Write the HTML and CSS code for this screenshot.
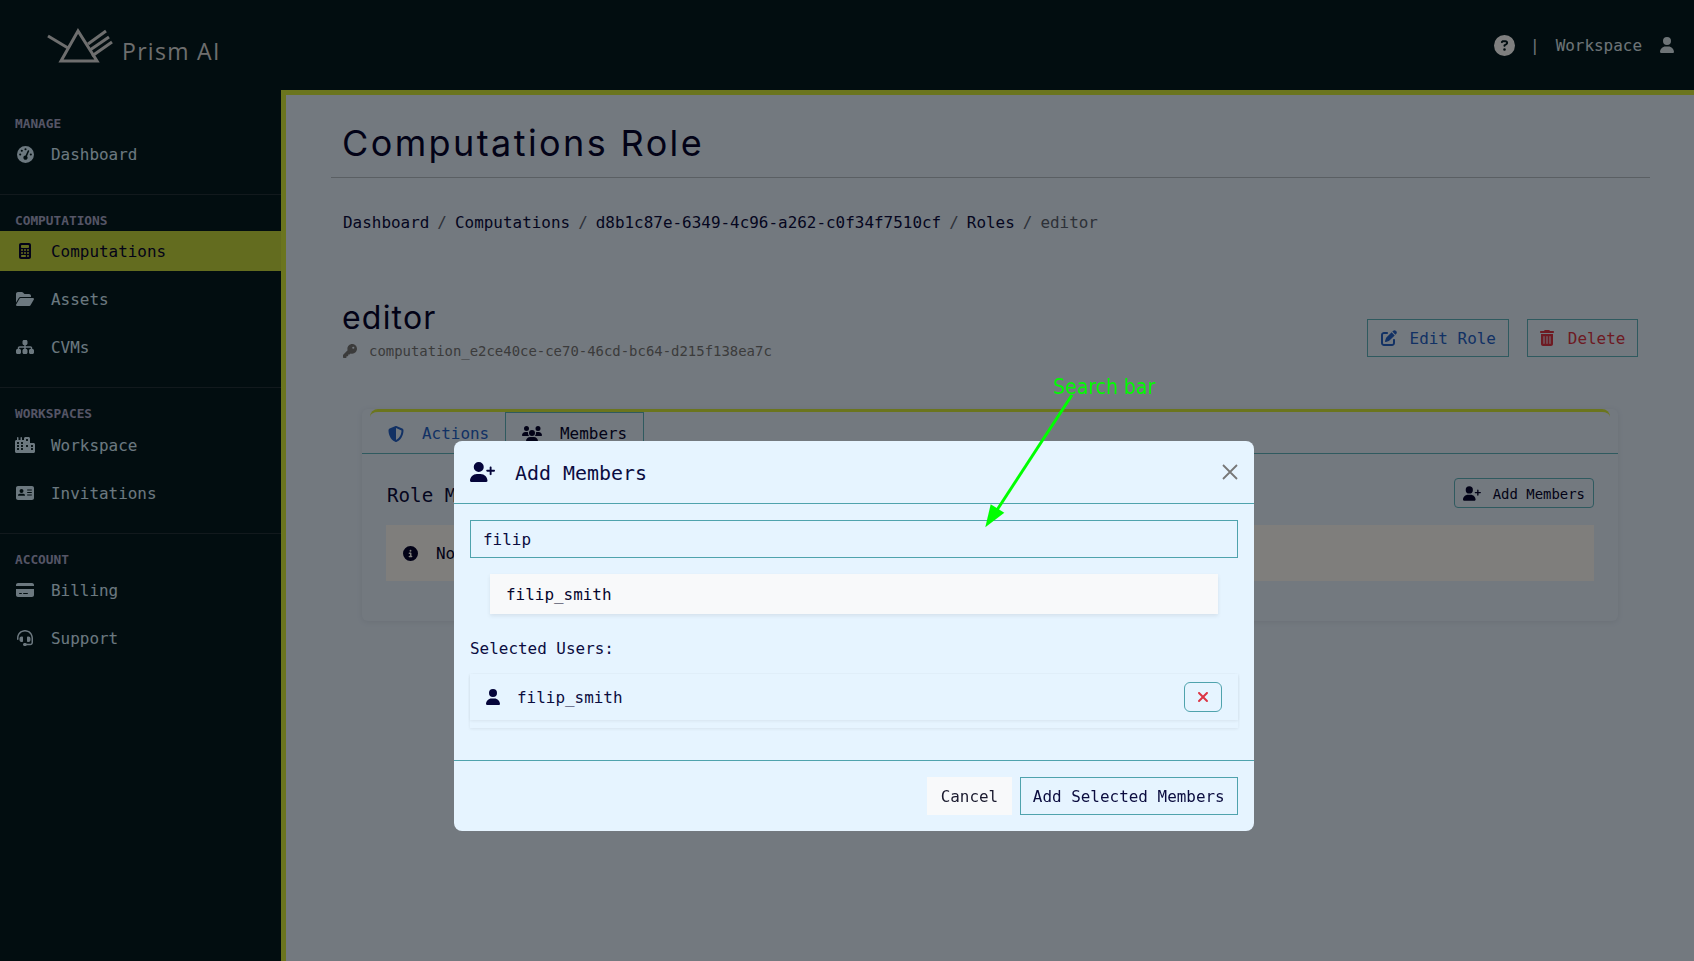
FILE: index.html
```html
<!DOCTYPE html>
<html lang="en">
<head>
<meta charset="utf-8">
<title>Computations Role</title>
<link rel="stylesheet" href="styles.css">
</head>
<body>
<div class="app">
  <header class="topbar">
    <a class="logo">
      <svg class="logo-mark" viewBox="0 0 70 36"><g fill="none" stroke="#dcdcdc" stroke-width="3"><path d="M31 3 14 33H50Z"/><path d="M1 8 21 20"/><path d="M41 16 59 3M43 22 62 9M45 28 65 14"/></g></svg>
      <span class="logo-text">Prism AI</span>
    </a>
    <div class="top-actions">
      <svg class="ic-help" viewBox="0 0 512 512"><path d="M256 512A256 256 0 1 0 256 0a256 256 0 1 0 0 512zM169.8 165.3c7.9-22.3 29.1-37.3 52.8-37.3h58.3c34.9 0 63.1 28.3 63.1 63.1c0 22.6-12.1 43.5-31.7 54.8L280 264.4c-.2 13-10.9 23.6-24 23.6c-13.3 0-24-10.7-24-24V250.5c0-8.6 4.6-16.5 12.1-20.8l44.3-25.4c4.7-2.7 7.6-7.7 7.6-13.1c0-8.4-6.8-15.1-15.1-15.1H222.6c-3.4 0-6.4 2.1-7.5 5.3l-.4 1.2c-4.4 12.5-18.2 19-30.6 14.6s-19-18.2-14.6-30.6l.4-1.2zM224 352a32 32 0 1 1 64 0 32 32 0 1 1 -64 0z"/></svg>
      <span class="top-sep">|</span>
      <span class="top-link">Workspace</span>
      <svg class="ic-user-top" viewBox="0 0 448 512"><path d="M224 256A128 128 0 1 0 224 0a128 128 0 1 0 0 256zm-45.7 48C79.8 304 0 383.8 0 482.3C0 498.7 13.3 512 29.7 512H418.3c16.4 0 29.7-13.3 29.7-29.7C448 383.8 368.2 304 269.7 304H178.3z"/></svg>
    </div>
  </header>

  <aside class="sidebar">
    <section class="nav-group first">
      <h6 class="nav-label">MANAGE</h6>
      <a class="nav-item"><span class="nav-ic"><svg viewBox="0 0 512 512" width="17" height="17"><path d="M0 256a256 256 0 1 1 512 0A256 256 0 1 1 0 256zM288 96a32 32 0 1 0 -64 0 32 32 0 1 0 64 0zM256 416c35.3 0 64-28.7 64-64c0-17.4-6.9-33.1-18.1-44.6L366 161.7c5.3-12.1-.2-26.3-12.3-31.6s-26.3 .2-31.6 12.3L257.9 288c-.6 0-1.3 0-1.9 0c-35.3 0-64 28.7-64 64s28.7 64 64 64zM176 144a32 32 0 1 0 -64 0 32 32 0 1 0 64 0zM96 288a32 32 0 1 0 0-64 32 32 0 1 0 0 64zm352-32a32 32 0 1 0 -64 0 32 32 0 1 0 64 0z"/></svg></span>Dashboard</a>
    </section>
    <section class="nav-group">
      <h6 class="nav-label">COMPUTATIONS</h6>
      <a class="nav-item active"><span class="nav-ic"><svg viewBox="0 0 384 512" width="12" height="16"><path d="M64 0C28.7 0 0 28.7 0 64V448c0 35.3 28.7 64 64 64H320c35.3 0 64-28.7 64-64V64c0-35.3-28.7-64-64-64H64zM96 64H288c17.7 0 32 14.3 32 32v32c0 17.7-14.3 32-32 32H96c-17.7 0-32-14.3-32-32V96c0-17.7 14.3-32 32-32zm32 160a32 32 0 1 1 -64 0 32 32 0 1 1 64 0zM96 352a32 32 0 1 1 0-64 32 32 0 1 1 0 64zM64 416c0-17.7 14.3-32 32-32h96c17.7 0 32 14.3 32 32s-14.3 32-32 32H96c-17.7 0-32-14.3-32-32zM192 256a32 32 0 1 1 0-64 32 32 0 1 1 0 64zm32 64a32 32 0 1 1 -64 0 32 32 0 1 1 64 0zm64-64a32 32 0 1 1 0-64 32 32 0 1 1 0 64zm32 64a32 32 0 1 1 -64 0 32 32 0 1 1 64 0zM288 448a32 32 0 1 1 0-64 32 32 0 1 1 0 64z"/></svg></span>Computations</a>
      <a class="nav-item"><span class="nav-ic"><svg viewBox="0 0 576 512" width="18" height="16"><path d="M88.7 223.8L0 375.8V96C0 60.7 28.7 32 64 32H181.5c17 0 33.3 6.7 45.3 18.7l26.5 26.5c12 12 28.3 18.7 45.3 18.7H416c35.3 0 64 28.7 64 64v32H144c-22.8 0-43.8 12.1-55.3 31.8zm27.6 16.1C122.1 230 132.6 224 144 224H544c11.5 0 22 6.1 27.7 16.1s5.7 22.2-.1 32.1l-112 192C453.9 474 443.4 480 432 480H32c-11.5 0-22-6.1-27.7-16.1s-5.7-22.2 .1-32.1l112-192z"/></svg></span>Assets</a>
      <a class="nav-item"><span class="nav-ic"><svg viewBox="0 0 576 512" width="18" height="16"><path d="M208 80c0-26.5 21.5-48 48-48h64c26.5 0 48 21.5 48 48v64c0 26.5-21.5 48-48 48h-8v40H464c30.9 0 56 25.1 56 56v32h8c26.5 0 48 21.5 48 48v64c0 26.5-21.5 48-48 48H464c-26.5 0-48-21.5-48-48V368c0-26.5 21.5-48 48-48h8V288c0-4.4-3.6-8-8-8H312v40h8c26.5 0 48 21.5 48 48v64c0 26.5-21.5 48-48 48H256c-26.5 0-48-21.5-48-48V368c0-26.5 21.5-48 48-48h8V280H112c-4.4 0-8 3.6-8 8v32h8c26.5 0 48 21.5 48 48v64c0 26.5-21.5 48-48 48H48c-26.5 0-48-21.5-48-48V368c0-26.5 21.5-48 48-48h8V288c0-30.9 25.1-56 56-56H264V192h-8c-26.5 0-48-21.5-48-48V80z"/></svg></span>CVMs</a>
    </section>
    <section class="nav-group">
      <h6 class="nav-label">WORKSPACES</h6>
      <a class="nav-item"><span class="nav-ic"><svg viewBox="0 0 640 512" width="20" height="16"><path d="M480 48c0-26.5-21.5-48-48-48H336c-26.5 0-48 21.5-48 48V96H224V24c0-13.3-10.7-24-24-24s-24 10.7-24 24V96H112V24c0-13.3-10.7-24-24-24S64 10.7 64 24V96H48C21.5 96 0 117.5 0 144V464c0 26.5 21.5 48 48 48H592c26.5 0 48-21.5 48-48V240c0-26.5-21.5-48-48-48H480V48zm96 320v32c0 8.8-7.2 16-16 16H528c-8.8 0-16-7.2-16-16V368c0-8.8 7.2-16 16-16h32c8.8 0 16 7.2 16 16zM240 416H208c-8.8 0-16-7.2-16-16V368c0-8.8 7.2-16 16-16h32c8.8 0 16 7.2 16 16v32c0 8.8-7.2 16-16 16zM128 400c0 8.8-7.2 16-16 16H80c-8.8 0-16-7.2-16-16V368c0-8.8 7.2-16 16-16h32c8.8 0 16 7.2 16 16v32zM560 256c8.8 0 16 7.2 16 16v32c0 8.8-7.2 16-16 16H528c-8.8 0-16-7.2-16-16V272c0-8.8 7.2-16 16-16h32zM256 176v32c0 8.8-7.2 16-16 16H208c-8.8 0-16-7.2-16-16V176c0-8.8 7.2-16 16-16h32c8.8 0 16 7.2 16 16zM112 160c8.8 0 16 7.2 16 16v32c0 8.8-7.2 16-16 16H80c-8.8 0-16-7.2-16-16V176c0-8.8 7.2-16 16-16h32zM256 304c0 8.8-7.2 16-16 16H208c-8.8 0-16-7.2-16-16V272c0-8.8 7.2-16 16-16h32c8.8 0 16 7.2 16 16v32c0 8.8-7.2 16-16 16zM112 320H80c-8.8 0-16-7.2-16-16V272c0-8.8 7.2-16 16-16h32c8.8 0 16 7.2 16 16v32c0 8.8-7.2 16-16 16zm304-48v32c0 8.8-7.2 16-16 16H368c-8.8 0-16-7.2-16-16V272c0-8.8 7.2-16 16-16h32c8.8 0 16 7.2 16 16zM368 64h32c8.8 0 16 7.2 16 16v32c0 8.8-7.2 16-16 16H368c-8.8 0-16-7.2-16-16V80c0-8.8 7.2-16 16-16zm48 240"/></svg></span>Workspace</a>
      <a class="nav-item"><span class="nav-ic"><svg viewBox="0 0 576 512" width="18" height="16"><path fill-rule="evenodd" d="M64 32H512c35.3 0 64 28.700 64 64V416c0 35.300-28.700 64-64 64H64c-35.300 0-64-28.700-64-64V96C0 60.700 28.700 32 64 32zM176 128a64 64 0 1 0 0 128 64 64 0 1 0 0-128zM118 280c-30 0-54 24-54 54 0 6 5 10 10 10H278c5 0 10-4 10-10 0-30-24-54-54-54zM368 144c-9 0-16 7-16 16s7 16 16 16H496c9 0 16-7 16-16s-7-16-16-16zm0 80c-9 0-16 7-16 16s7 16 16 16H496c9 0 16-7 16-16s-7-16-16-16zm0 80c-9 0-16 7-16 16s7 16 16 16H496c9 0 16-7 16-16s-7-16-16-16z"/></svg></span>Invitations</a>
    </section>
    <section class="nav-group">
      <h6 class="nav-label">ACCOUNT</h6>
      <a class="nav-item"><span class="nav-ic"><svg viewBox="0 0 576 512" width="18" height="16"><path d="M64 32C28.700 32 0 60.700 0 96v32H576V96c0-35.300-28.700-64-64-64H64zM576 224H0V416c0 35.300 28.700 64 64 64H512c35.300 0 64-28.700 64-64V224zM112 352h64c8.800 0 16 7.200 16 16s-7.200 16-16 16H112c-8.800 0-16-7.200-16-16s7.200-16 16-16zm112 16c0-8.800 7.200-16 16-16H368c8.800 0 16 7.200 16 16s-7.200 16-16 16H240c-8.800 0-16-7.200-16-16z"/></svg></span>Billing</a>
      <a class="nav-item"><span class="nav-ic"><svg viewBox="0 0 512 512" width="16" height="16"><path d="M256 48C141.100 48 48 141.100 48 256v40c0 13.300-10.700 24-24 24s-24-10.700-24-24V256C0 114.600 114.600 0 256 0S512 114.600 512 256V400.100c0 48.600-39.400 88-88.100 88L313.600 488c-8.300 14.300-23.800 24-41.600 24H240c-26.500 0-48-21.500-48-48s21.500-48 48-48h32c17.800 0 33.300 9.700 41.600 24l110.400 .1c22.100 0 40-17.900 40-40V256c0-114.900-93.100-208-208-208zM144 208h16c17.700 0 32 14.300 32 32V352c0 17.700-14.300 32-32 32H144c-35.300 0-64-28.700-64-64V272c0-35.300 28.700-64 64-64zm224 0c35.300 0 64 28.700 64 64v48c0 35.300-28.700 64-64 64H352c-17.700 0-32-14.300-32-32V240c0-17.700 14.300-32 32-32h16z"/></svg></span>Support</a>
    </section>
  </aside>

  <main class="main">
    <div class="page-title"><h1>Computations Role</h1></div>
    <nav class="crumbs">
      <a>Dashboard</a><i>/</i><a>Computations</a><i>/</i><a>d8b1c87e-6349-4c96-a262-c0f34f7510cf</a><i>/</i><a>Roles</a><i>/</i><span>editor</span>
    </nav>
    <div class="role-head">
      <div>
        <h2>editor</h2>
        <div class="role-id">
          <svg viewBox="0 0 512 512"><path d="M336 352c97.200 0 176-78.800 176-176S433.200 0 336 0S160 78.800 160 176c0 18.700 2.900 36.800 8.300 53.700L7 391c-4.500 4.500-7 10.600-7 17v80c0 13.300 10.700 24 24 24h80c13.300 0 24-10.700 24-24V448h40c13.300 0 24-10.700 24-24V384h40c6.400 0 12.500-2.500 17-7l33.300-33.300c16.900 5.400 35 8.300 53.700 8.300zM376 96a40 40 0 1 1 0 80 40 40 0 1 1 0-80z"/></svg>
          <span>computation_e2ce40ce-ce70-46cd-bc64-d215f138ea7c</span>
        </div>
      </div>
      <div class="role-btns">
        <button class="btn-edit"><svg viewBox="0 0 512 512"><path d="M471.600 21.700c-21.900-21.900-57.300-21.900-79.200 0L362.300 51.700l97.900 97.900 30.100-30.100c21.900-21.900 21.900-57.300 0-79.200L471.600 21.700zm-299.200 220c-6.100 6.100-10.800 13.600-13.500 21.900l-29.600 88.800c-2.900 8.600-.6 18.100 5.800 24.600s15.900 8.700 24.600 5.800l88.800-29.600c8.200-2.700 15.700-7.400 21.900-13.500L437.700 172.300 339.700 74.300 172.400 241.700zM96 64C43 64 0 107 0 160V416c0 53 43 96 96 96H352c53 0 96-43 96-96V320c0-17.700-14.300-32-32-32s-32 14.300-32 32v96c0 17.700-14.300 32-32 32H96c-17.700 0-32-14.300-32-32V160c0-17.700 14.300-32 32-32h96c17.700 0 32-14.300 32-32s-14.300-32-32-32H96z"/></svg>Edit Role</button>
        <button class="btn-del"><svg viewBox="0 0 448 512"><path d="M135.200 17.700C140.600 6.800 151.700 0 163.800 0H284.200c12.100 0 23.200 6.800 28.600 17.700L320 32h96c17.700 0 32 14.300 32 32s-14.300 32-32 32H32C14.300 96 0 81.700 0 64S14.300 32 32 32h96l7.200-14.300zM32 128H416V448c0 35.300-28.700 64-64 64H96c-35.300 0-64-28.700-64-64V128zm96 64c-8.800 0-16 7.200-16 16V432c0 8.800 7.200 16 16 16s16-7.200 16-16V208c0-8.800-7.200-16-16-16zm96 0c-8.800 0-16 7.200-16 16V432c0 8.800 7.200 16 16 16s16-7.200 16-16V208c0-8.800-7.200-16-16-16zm96 0c-8.800 0-16 7.200-16 16V432c0 8.800 7.200 16 16 16s16-7.200 16-16V208c0-8.800-7.200-16-16-16z"/></svg>Delete</button>
      </div>
    </div>

    <section class="card">
      <div class="card-head">
        <div class="tabs">
          <a class="tab tab-actions"><svg viewBox="0 0 512 512" width="16" height="16"><path d="M256 0c4.600 0 9.200 1 13.400 2.900L457.700 82.800c22 9.300 38.400 31 38.300 57.200c-.5 99.200-41.300 280.700-213.600 363.200c-16.700 8-36.100 8-52.800 0C57.300 420.700 16.500 239.200 16 140c-.1-26.200 16.300-47.900 38.300-57.200L242.700 2.900C246.800 1 251.400 0 256 0zm0 66.800V444.800C394 378 431.100 230.100 432 141.400L256 66.800l0 0z"/></svg>Actions</a>
          <a class="tab tab-members"><svg viewBox="0 0 640 512" width="20" height="16"><path d="M144 0a80 80 0 1 1 0 160A80 80 0 1 1 144 0zM512 0a80 80 0 1 1 0 160A80 80 0 1 1 512 0zM0 298.700C0 239.800 47.800 192 106.700 192h42.700c15.900 0 31 3.500 44.600 9.700c-1.300 7.200-1.900 14.700-1.900 22.300c0 38.200 16.800 72.500 43.300 96c-.2 0-.4 0-.7 0H21.300C9.600 320 0 310.400 0 298.700zM405.300 320c-.2 0-.4 0-.7 0c26.600-23.500 43.300-57.800 43.300-96c0-7.600-.7-15-1.900-22.300c13.600-6.300 28.700-9.700 44.600-9.700h42.700C592.200 192 640 239.800 640 298.700c0 11.800-9.600 21.300-21.300 21.300H405.300zM224 224a96 96 0 1 1 192 0 96 96 0 1 1 -192 0zM128 485.300C128 411.700 187.700 352 261.300 352H378.700C452.300 352 512 411.700 512 485.300c0 14.700-11.900 26.700-26.700 26.700H154.700c-14.700 0-26.700-11.900-26.700-26.700z"/></svg>Members</a>
        </div>
      </div>
      <div class="card-body">
        <div class="members-row">
          <h5>Role Members</h5>
          <button class="btn-add-sm"><svg viewBox="0 0 640 512"><path d="M96 128a128 128 0 1 1 256 0A128 128 0 1 1 96 128zM0 482.300C0 383.800 79.800 304 178.300 304h91.400C368.200 304 448 383.800 448 482.300c0 16.400-13.300 29.700-29.700 29.700H29.700C13.300 512 0 498.700 0 482.300zM504 312V248H440c-13.300 0-24-10.700-24-24s10.700-24 24-24h64V136c0-13.300 10.700-24 24-24s24 10.700 24 24v64h64c13.300 0 24 10.700 24 24s-10.700 24-24 24H552v64c0 13.300-10.700 24-24 24s-24-10.700-24-24z"/></svg>Add Members</button>
        </div>
        <div class="alert">
          <svg viewBox="0 0 512 512"><path d="M256 512A256 256 0 1 0 256 0a256 256 0 1 0 0 512zM216 336h24V272H216c-13.300 0-24-10.700-24-24s10.700-24 24-24h48c13.300 0 24 10.700 24 24v88h8c13.300 0 24 10.700 24 24s-10.700 24-24 24H216c-13.300 0-24-10.700-24-24s10.700-24 24-24zm40-208a32 32 0 1 1 0 64 32 32 0 1 1 0-64z"/></svg>
          <span>No members found for this role.</span>
        </div>
      </div>
    </section>
  </main>
</div>

<div class="backdrop">
  <div class="modal">
    <div class="modal-head">
      <svg class="modal-ic" viewBox="0 0 640 512"><path d="M96 128a128 128 0 1 1 256 0A128 128 0 1 1 96 128zM0 482.300C0 383.800 79.800 304 178.300 304h91.400C368.200 304 448 383.800 448 482.300c0 16.400-13.300 29.700-29.700 29.700H29.700C13.300 512 0 498.700 0 482.300zM504 312V248H440c-13.300 0-24-10.700-24-24s10.700-24 24-24h64V136c0-13.300 10.700-24 24-24s24 10.700 24 24v64h64c13.300 0 24 10.700 24 24s-10.700 24-24 24H552v64c0 13.300-10.700 24-24 24s-24-10.700-24-24z"/></svg>
      <h5>Add Members</h5>
      <svg class="modal-close" viewBox="0 0 16 16"><path d="M1 1 15 15M15 1 1 15" stroke="#777" stroke-width="1.800" fill="none"/></svg>
    </div>
    <div class="modal-body">
      <input class="search" value="filip">
      <div class="suggest">filip_smith</div>
      <div class="sel-label">Selected Users:</div>
      <div class="sel-list">
        <div class="sel-row">
          <svg class="sel-user" viewBox="0 0 448 512"><path d="M224 256A128 128 0 1 0 224 0a128 128 0 1 0 0 256zm-45.700 48C79.800 304 0 383.800 0 482.300C0 498.700 13.300 512 29.700 512H418.300c16.400 0 29.700-13.300 29.700-29.700C448 383.800 368.200 304 269.700 304H178.300z"/></svg>
          <span>filip_smith</span>
          <button class="sel-remove"><svg viewBox="0 0 384 512"><path d="M342.600 150.600c12.500-12.500 12.500-32.800 0-45.300s-32.800-12.500-45.300 0L192 210.700 86.600 105.400c-12.500-12.500-32.800-12.500-45.300 0s-12.500 32.800 0 45.300L146.700 256 41.400 361.400c-12.500 12.500-12.500 32.800 0 45.300s32.800 12.500 45.300 0L192 301.300 297.400 406.600c12.500 12.500 32.800 12.500 45.300 0s12.500-32.800 0-45.300L237.300 256 342.600 150.600z"/></svg></button>
        </div>
      </div>
    </div>
    <div class="modal-foot">
      <button class="btn-cancel">Cancel</button>
      <button class="btn-confirm">Add Selected Members</button>
    </div>
  </div>
</div>

<div class="note">
  <span class="note-text">Search bar</span>
  <svg class="note-arrow" viewBox="0 0 110 150"><path d="M87 3 12 118" stroke="#00ff00" stroke-width="3" fill="none"/><path d="M.3 135.300 5.700 112.300 19.300 120.700Z" fill="#00ff00"/></svg>
</div>
</body>
</html>
```
FILE: styles.css
```css
* { box-sizing: border-box; }
html, body { margin: 0; height: 100%; }
body {
  background: #e6f2ff;
  color: #0b0c3f;
  font-family: "DejaVu Sans Mono", monospace;
  font-size: 15.950px;
  overflow: hidden;
}
h1, h2, h5, h6 { margin: 0; font-weight: 400; }
button { font-family: inherit; background: none; cursor: pointer; }
svg { fill: currentColor; flex: none; display: block; }

.app {
  display: grid;
  grid-template-columns: 281px 1fr;
  grid-template-rows: 90px 1fr;
  height: 961px;
}

/* top bar */
.topbar {
  grid-column: 1 / 3;
  background: #041a20;
  display: flex;
  align-items: center;
  justify-content: space-between;
  padding: 0 20px 0 47px;
}
.logo { display: flex; align-items: flex-end; height: 36px; margin-top: 2px; }
.logo-mark { width: 70px; height: 36px; }
.logo-text {
  font-family: "Open Sans", sans-serif;
  font-size: 23px;
  line-height: 26px;
  color: #dcdcdc;
  margin-left: 5px;
  letter-spacing: 1.300px;
}
.top-actions { display: flex; align-items: center; color: #dce8ee; }
.ic-help { width: 21px; height: 21px; color: #fff; }
.top-sep { margin-left: 15px; }
.top-link { margin-left: 16px; }
.ic-user-top { width: 14px; height: 16px; margin-left: 18px; }

/* sidebar */
.sidebar { background: #041a20; }
.nav-group { padding: 16px 0 12px; border-bottom: 1px solid #25333a; }
.nav-group:last-child { border-bottom: 0; }
.nav-group.first { padding-top: 24px; }
.nav-group:nth-child(3) .nav-label { padding-bottom: 1px; }
.nav-label {
  font-size: 12.800px;
  font-weight: 700;
  line-height: 20px;
  padding-left: 15px;
  color: #aaaacc;
}
.nav-item {
  display: flex;
  align-items: center;
  height: 40px;
  margin-bottom: 8px;
  color: #d8f0ff;
}
.nav-item.active { background: #c6d83e; color: #060630; }
.nav-ic { width: 20px; margin: 0 16px 0 15px; display: flex; justify-content: center; }

/* main */
.main {
  border-top: 5px solid #d6ea3c;
  border-left: 5px solid #d6ea3c;
  padding: 0 44px 0 45px;
  min-width: 0;
}
.page-title {
  height: 83px;
  padding: 26px 11px 0;
  border-bottom: 1px solid #b5bfc6;
}
.page-title h1 {
  font-family: "Inter", sans-serif;
  font-size: 36px;
  line-height: 44px;
  letter-spacing: 2.400px;
  color: #05052e;
}
.crumbs { margin-top: 33px; padding: 0 12px; line-height: 24px; display: flex; color: #0b0c3f; }
.crumbs i { font-style: normal; padding: 0 8px; color: #5b6370; }
.crumbs span { color: #5b6370; }

.role-head {
  margin-top: 63px;
  padding: 0 12px;
  display: flex;
  justify-content: space-between;
  align-items: flex-end;
}
.role-head h2 {
  font-family: "Inter", sans-serif;
  font-size: 32px;
  line-height: 40px;
  letter-spacing: 1.200px;
  margin-left: -1px;
  color: #05052e;
}
.role-id {
  display: flex;
  align-items: center;
  margin-top: 3px;
  font-size: 13.950px;
  line-height: 20px;
  color: #777;
}
.role-id svg { width: 14px; height: 14px; margin-right: 12px; }
.role-btns { display: flex; gap: 18px; margin-bottom: 4px; }
.role-btns button {
  display: flex;
  align-items: center;
  height: 38px;
  border: 1px solid #5fb4bf;
  font-size: 15.950px;
  padding: 0 12px;
}
.role-btns svg { height: 16px; }
.btn-edit { color: #2563c9; }
.btn-edit svg { width: 16px; margin-right: 13px; }
.role-btns .btn-edit { padding: 0 11.900px 0 13px; }
.btn-del { color: #dc3545; }
.btn-del svg { width: 14px; margin-right: 14px; }
.role-btns .btn-del { padding-right: 11.600px; }

.card {
  margin: 48px 32px 0 31px;
  box-shadow: 0 1px 6px rgba(0, 0, 0, .08);
  border-radius: 6px;
}
.card-head { border-bottom: 1px solid #5fb4bf; height: 45px; }
.tabs {
  margin: 0 8px;
  height: 44px;
  border-top: 3px solid #d6ea3c;
  border-radius: 8px 8px 0 0;
  display: flex;
}
.tab { display: flex; align-items: center; padding-top: 2px; }
.tab-actions { width: 135px; padding-left: 18px; color: #2563c9; }
.tab-actions svg { margin-right: 18px; }
.tab-members {
  width: 139px;
  padding-left: 16px;
  border: 1px solid #5fb4bf;
  color: #05052e;
}
.tab-members svg { margin-right: 18px; }
.card-body { padding: 24px 24px 40px; }
.members-row { display: flex; justify-content: space-between; align-items: center; height: 30px; }
.members-row h5 { font-size: 19.200px; padding: 4px 0 0 1px; }
.btn-add-sm {
  display: flex;
  align-items: center;
  height: 30px;
  padding: 1px 8px 0;
  border: 1px solid #5fb4bf;
  border-radius: 4px;
  font-size: 13.950px;
  color: #05052e;
}
.btn-add-sm svg { width: 18px; height: 15px; margin-right: 12px; }
.alert {
  margin-top: 17px;
  height: 56px;
  padding-left: 17px;
  background: #fffcf8;
  display: flex;
  align-items: center;
  color: #05052e;
}
.alert svg { width: 15px; height: 15px; margin-right: 18px; }

/* modal */
.backdrop {
  position: fixed;
  inset: 0;
  background: rgba(0, 0, 0, .5);
  display: flex;
  justify-content: center;
  align-items: flex-start;
  padding: 441px 0 0 14px;
}
.modal {
  width: 800px;
  height: 390px;
  background: #e6f4ff;
  border-radius: 8px;
  display: flex;
  flex-direction: column;
}
.modal-head {
  height: 63px;
  flex: none;
  display: flex;
  align-items: center;
  padding: 0 16px;
  border-bottom: 1px solid #4fa3ad;
}
.modal-ic { width: 25px; height: 20px; margin-right: 20px; color: #05053a; }
.modal-head h5 { font-size: 19.950px; flex: 1; padding-top: 2px; }
.modal-close { width: 16px; height: 16px; }
.modal-body { padding: 16px; flex: 1; }
.search {
  display: block;
  width: 100%;
  height: 38px;
  border: 1px solid #4fa3ad;
  background: transparent;
  padding: 0 12px;
  font: inherit;
  color: inherit;
  outline: 0;
}
.suggest {
  margin: 16px 20px 22px;
  height: 40px;
  background: #f8f9fa;
  padding-left: 16px;
  display: flex;
  align-items: center;
  color: #05052e;
  box-shadow: 0 2px 4px rgba(0, 0, 0, .08);
}
.sel-label { line-height: 24px; padding-top: 1px; }
.sel-list {
  margin-top: 13px;
  padding-bottom: 8px;
  box-shadow: 0 1px 3px rgba(0, 0, 0, .07);
}
.sel-row {
  height: 46px;
  display: flex;
  align-items: center;
  padding: 0 16px;
  box-shadow: 0 1px 3px rgba(0, 0, 0, .07);
}
.sel-user { width: 14px; height: 16px; margin-right: 17px; color: #05053a; }
.sel-row span { flex: 1; }
.sel-remove {
  width: 38px;
  height: 30px;
  border: 1px solid #4fa3ad;
  border-radius: 6px;
  color: #dc3545;
  display: flex;
  align-items: center;
  justify-content: center;
  padding: 0;
}
.sel-remove svg { width: 12px; height: 16px; }
.modal-foot {
  flex: none;
  height: 71px;
  border-top: 1px solid #4fa3ad;
  padding: 16px;
  display: flex;
  justify-content: flex-end;
  gap: 8px;
}
.modal-foot button { height: 38px; font-size: 15.950px; padding: 0 12.300px; }
.modal-foot .btn-cancel { background: #f8f9fa; border: 0; color: #1a1a2e; padding: 0 13.300px; }
.btn-confirm { border: 1px solid #4fa3ad; color: #0b0c3f; }

/* annotation drawn over the screenshot */
.note { position: fixed; left: 982px; top: 372px; width: 180px; height: 160px; }
.note-text {
  position: absolute;
  left: 71px;
  top: 2px;
  font-family: "DejaVu Sans", sans-serif;
  font-stretch: condensed;
  font-size: 21px;
  line-height: 26px;
  color: #00ff00;
  white-space: nowrap;
}
.note-arrow { position: absolute; left: 3px; top: 20px; width: 110px; height: 150px; }
```
